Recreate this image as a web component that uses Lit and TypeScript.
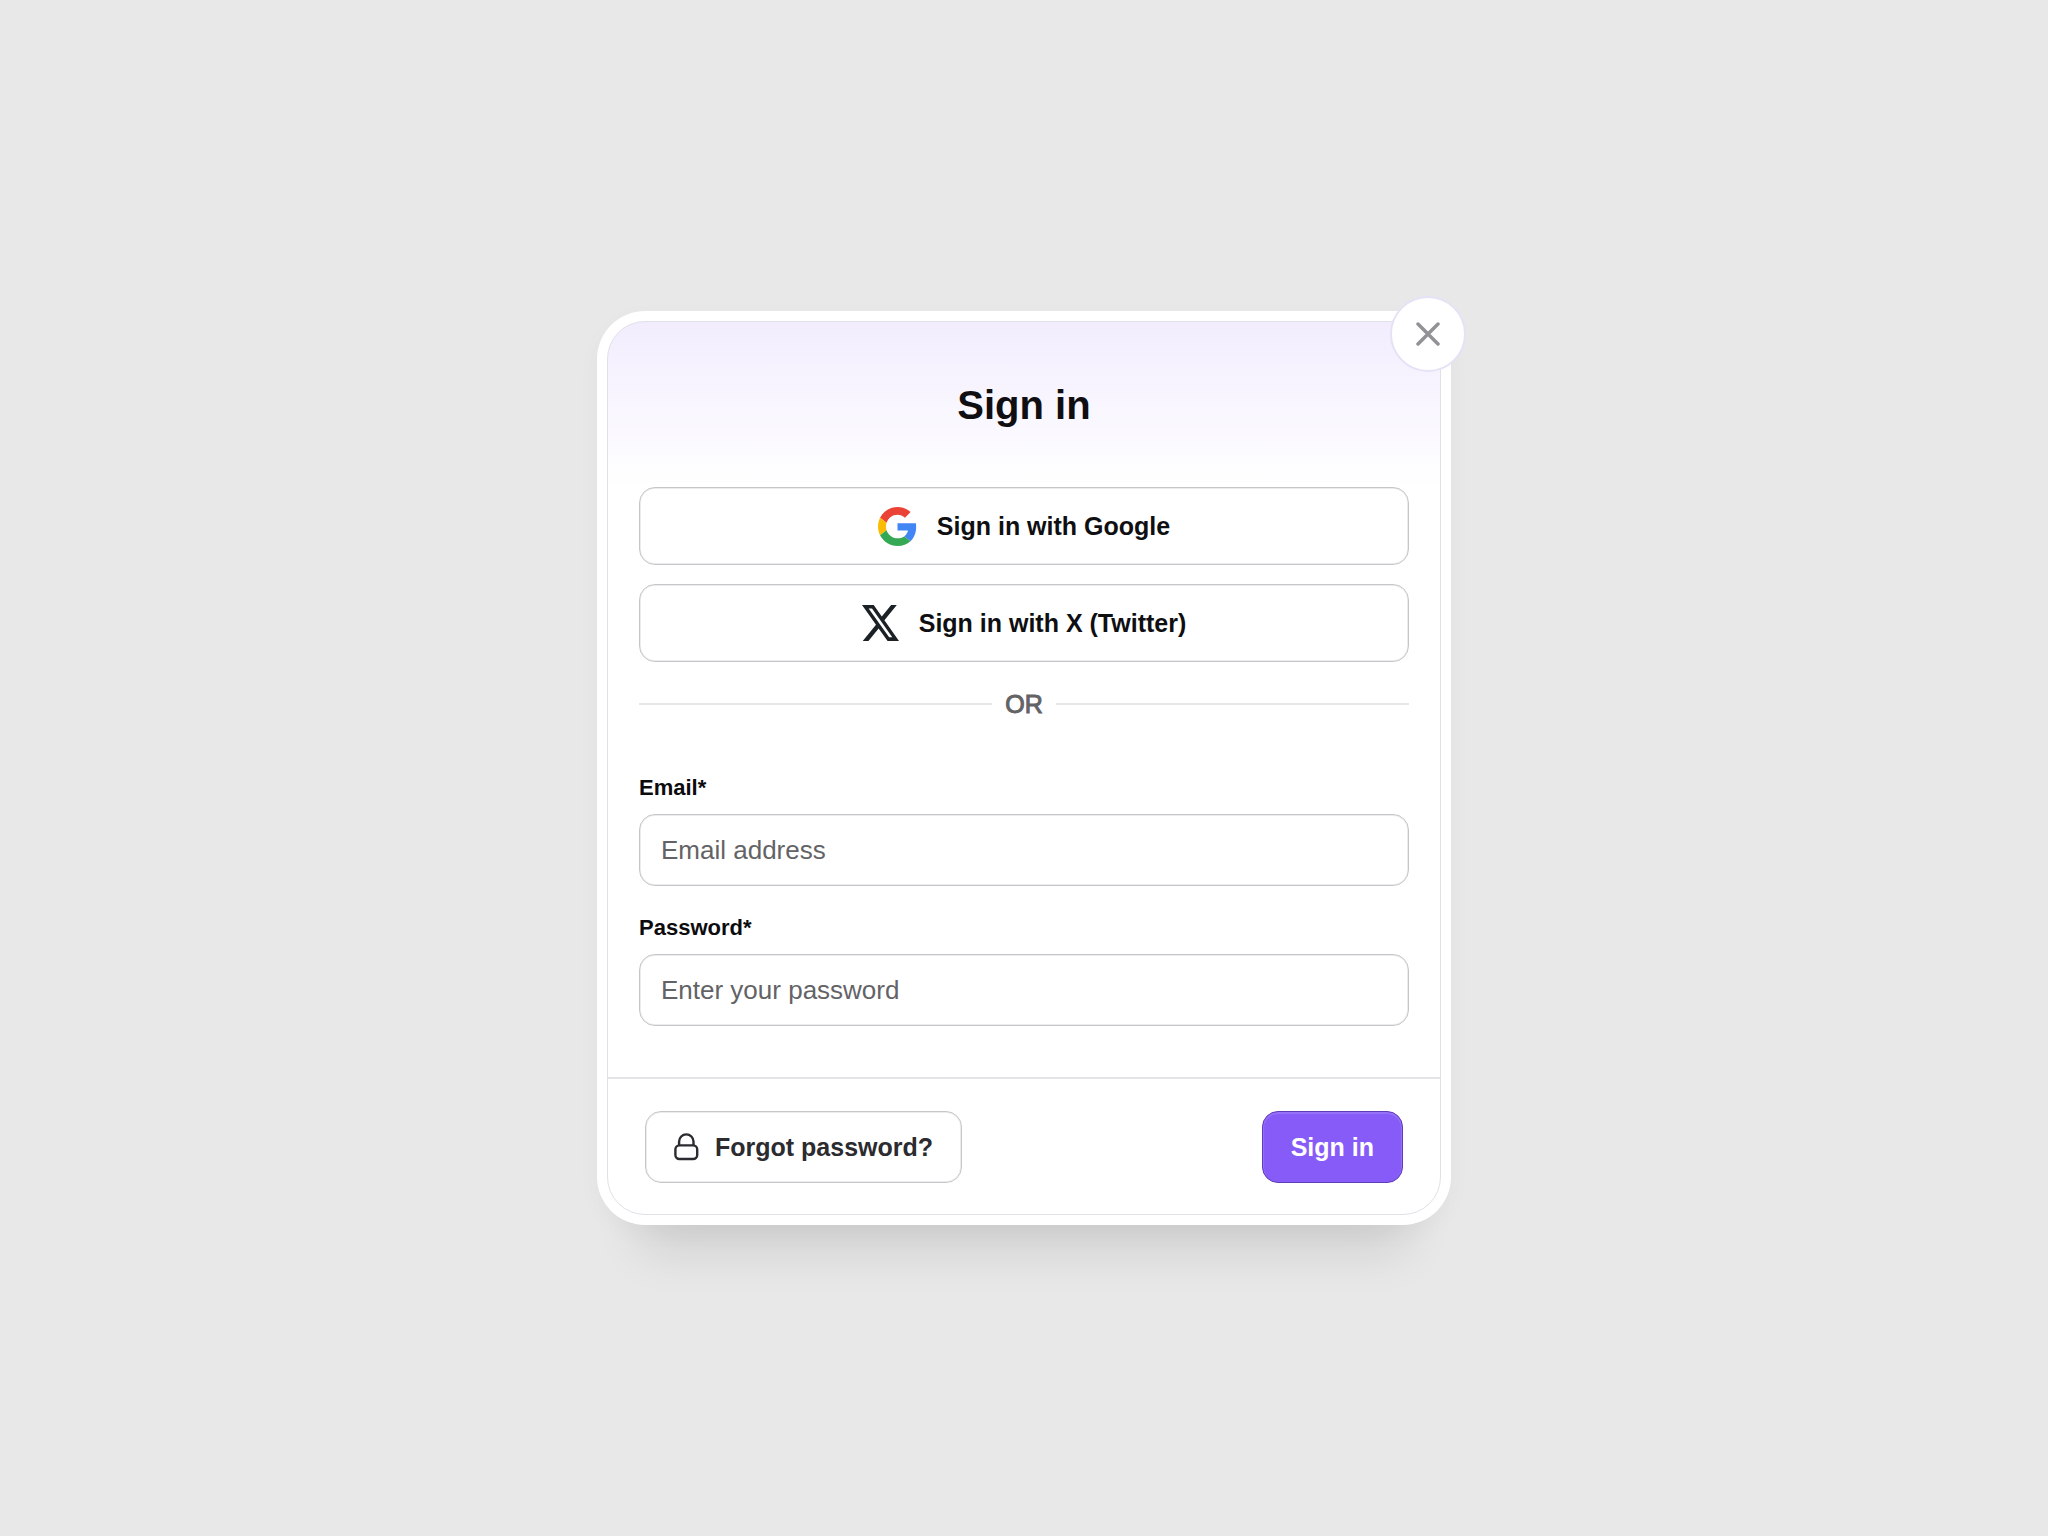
import { LitElement, html, css, svg } from "lit";
import { customElement, property } from "lit/decorators.js";

const googleIcon = html`<svg class="brand google" viewBox="0 0 48 48" aria-hidden="true">
  ${svg`<path fill="#ea4335" d="M24 9.5c3.54 0 6.71 1.22 9.21 3.6l6.85-6.85C35.9 2.38 30.47 0 24 0 14.62 0 6.51 5.38 2.56 13.22l7.98 6.19C12.43 13.72 17.74 9.5 24 9.5z"/>
  <path fill="#4285f4" d="M46.98 24.55c0-1.57-.15-3.09-.38-4.55H24v9.02h12.94c-.58 2.96-2.26 5.48-4.78 7.18l7.73 6c4.51-4.18 7.09-10.36 7.09-17.65z"/>
  <path fill="#fbbc05" d="M10.53 28.59c-.48-1.45-.76-2.99-.76-4.59s.27-3.14.76-4.59l-7.98-6.19C.92 16.46 0 20.12 0 24c0 3.88.92 7.54 2.56 10.78l7.97-6.19z"/>
  <path fill="#34a853" d="M24 48c6.48 0 11.93-2.13 15.89-5.81l-7.73-6c-2.15 1.45-4.92 2.3-8.16 2.3-6.26 0-11.57-4.22-13.47-9.91l-7.98 6.19C6.51 42.62 14.62 48 24 48z"/>`}
</svg>`;

const xIcon = html`<svg class="brand x" viewBox="1.25 2.25 21.58 19.5" preserveAspectRatio="none" aria-hidden="true">
  ${svg`<path fill="#1c2126" d="M18.244 2.25h3.308l-7.227 8.26 8.502 11.24H16.17l-5.214-6.817L4.99 21.75H1.68l7.73-8.835L1.254 2.25H8.08l4.713 6.231zm-1.161 17.52h1.833L7.084 4.126H5.117z"/>`}
</svg>`;

const lockIcon = html`<svg class="lock" viewBox="0 0 26 30" aria-hidden="true">
  ${svg`<g fill="none" stroke="#2b2b30" stroke-width="2.400"><rect x="1.400" y="13.400" width="21.800" height="13.600" rx="4"/><path d="M5.100 13.400v-3.800a7.200 7.200 0 0 1 14.400 0v3.800"/></g>`}
</svg>`;

const closeIcon = html`<svg class="cross" viewBox="0 0 24 24" aria-hidden="true">
  ${svg`<path d="M2 2l20 20M22 2L2 22" fill="none" stroke="#929296" stroke-width="3.500" stroke-linecap="round"/>`}
</svg>`;

const controls = css`
  * {
    box-sizing: border-box;
  }
  button,
  input {
    margin: 0;
    font-family: inherit;
  }
`;

@customElement("text-field")
class TextField extends LitElement {
  @property() label = "";
  @property() placeholder = "";
  @property() type = "text";

  static styles = [
    controls,
    css`
      :host {
        display: flex;
        flex-direction: column;
        gap: 13px;
      }
      .label {
        font-size: 22px;
        line-height: 26px;
        font-weight: 700;
        color: #0c0c0e;
      }
      .input {
        width: 100%;
        height: 72px;
        padding: 0 21px;
        border: 1px solid #c6c6c9;
        border-radius: 16px;
        background: #fff;
        box-shadow: inset 0 0 0 1px #ececee;
        font-size: 26px;
        color: #0c0c0e;
      }
      .input::placeholder {
        color: #636366;
        opacity: 1;
      }
    `,
  ];

  render() {
    return html`
      <label class="label" for="field">${this.label}</label>
      <input class="input" id="field" type=${this.type} placeholder=${this.placeholder} required />
    `;
  }
}

@customElement("app-root")
class AppRoot extends LitElement {
  static styles = [
    controls,
    css`
      :host {
        display: flex;
        align-items: center;
        justify-content: center;
        box-sizing: border-box;
        min-height: 100vh;
        padding: 24px;
        background: #e8e8e8;
        font-family: "Liberation Sans", Arial, sans-serif;
        color: #0f0f12;
      }
      .card {
        position: relative;
        width: 100%;
        max-width: 854px;
        padding: 10px;
        border-radius: 48px;
        background: #fff;
        box-shadow:
          0 70px 50px -45px rgba(0, 0, 0, 0.11),
          0 8px 24px rgba(0, 0, 0, 0.03);
      }
      .panel {
        border: 1px solid #e1e0e6;
        border-radius: 38px;
        background: linear-gradient(#f2edfe, #fff 166px);
      }
      .title {
        margin: 0;
        padding: 59px 32px 58px;
        font-size: 40px;
        line-height: 48px;
        font-weight: 700;
        text-align: center;
      }
      .body {
        display: flex;
        flex-direction: column;
        padding: 0 31px 51px;
      }
      .stack {
        display: flex;
        flex-direction: column;
        gap: 19px;
      }
      .fields {
        display: flex;
        flex-direction: column;
        gap: 29px;
      }
      .button {
        display: flex;
        align-items: center;
        justify-content: center;
        height: 72px;
        border: 1px solid #c6c6c9;
        border-radius: 16px;
        background: #fff;
        box-shadow: inset 0 0 0 1px #ececee;
        font-size: 25px;
        line-height: 30px;
        font-weight: 700;
        color: #0f0f12;
        cursor: pointer;
      }
      .social {
        height: 78px;
        gap: 20px;
      }
      .brand {
        flex: none;
      }
      .google {
        width: 39px;
        height: 39px;
      }
      .x {
        width: 37px;
        height: 36px;
      }
      .divider {
        display: flex;
        align-items: center;
        gap: 13px;
        margin: 28px 0 57px;
        font-size: 25px;
        line-height: 28px;
        color: #636366;
        -webkit-text-stroke: 1px #636366;
      }
      .divider::before,
      .divider::after {
        content: "";
        flex: 1;
        height: 2px;
        background: #e5e6e8;
      }
      .footer {
        display: flex;
        justify-content: space-between;
        padding: 32px 37px 31px;
        border-top: 2px solid #e4e4e6;
      }
      .forgot {
        gap: 15px;
        padding: 0 28px;
        color: #2b2b30;
      }
      .lock {
        width: 26px;
        height: 30px;
      }
      .submit {
        padding: 0 28px;
        border-color: #5f3cb8;
        background: #875bf7;
        box-shadow: inset 0 1px 1px 1px rgba(255, 255, 255, 0.14);
        color: #fff;
      }
      .close {
        position: absolute;
        top: -15px;
        right: -15px;
        display: flex;
        align-items: center;
        justify-content: center;
        width: 76px;
        height: 76px;
        padding: 0;
        border: 2px solid #e6e2f6;
        border-radius: 50%;
        background: #fff;
        cursor: pointer;
      }
      .cross {
        width: 24px;
        height: 24px;
      }
    `,
  ];

  render() {
    return html`
      <main class="card">
        <form class="panel" @submit=${(e: Event) => e.preventDefault()}>
          <h1 class="title">Sign in</h1>
          <div class="body">
            <div class="stack">
              <button class="button social" type="button">${googleIcon}<span>Sign in with Google</span></button>
              <button class="button social" type="button">${xIcon}<span>Sign in with X (Twitter)</span></button>
            </div>
            <div class="divider">OR</div>
            <div class="fields">
              <text-field label="Email*" type="email" placeholder="Email address"></text-field>
              <text-field label="Password*" type="password" placeholder="Enter your password"></text-field>
            </div>
          </div>
          <div class="footer">
            <button class="button forgot" type="button">${lockIcon}<span>Forgot password?</span></button>
            <button class="button submit" type="submit">Sign in</button>
          </div>
        </form>
        <button class="close" type="button" aria-label="Close">${closeIcon}</button>
      </main>
    `;
  }
}
